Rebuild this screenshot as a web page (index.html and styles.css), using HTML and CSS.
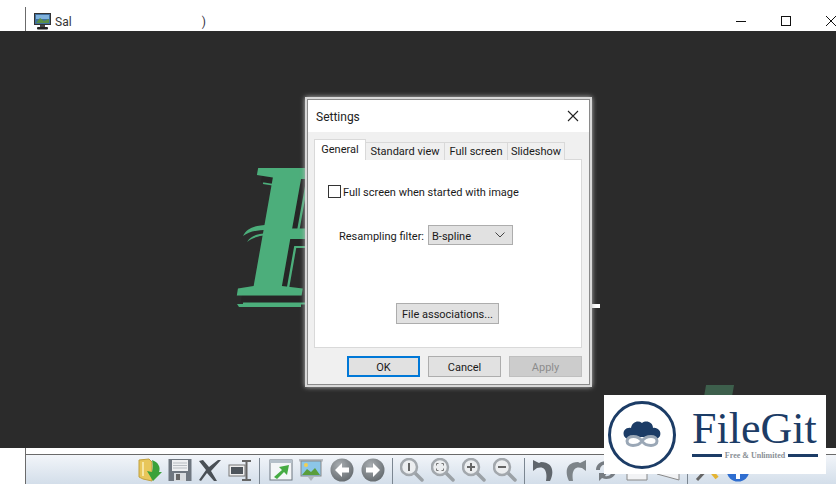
FILE: index.html
```html
<!DOCTYPE html>
<html lang="en">
<head>
    <meta charset="UTF-8">
    <title>Settings</title>
    <link rel="stylesheet" href="styles.css">
</head>
<body>
    <div class="app">
        <div class="titlebar">
            <div class="titlebar-inner">
                <svg class="app-icon" width="17" height="17" viewBox="0 0 17 17">
                    <rect x="0.5" y="0.5" width="16" height="11" fill="#3f6f9f" stroke="#333"/>
                    <rect x="2" y="2" width="13" height="4" fill="#7fb2dd"/>
                    <path d="M2 10 L6 5 L10 8 L15 6 V10 Z" fill="#5b8f45"/>
                    <rect x="6" y="12" width="5" height="2" fill="#444"/>
                    <rect x="3" y="14" width="11" height="2.5" rx="1" fill="#222"/>
                </svg>
                <span class="app-title">Sal</span>
                <span class="app-title-rest">)</span>
                <div class="window-controls">
                    <svg width="10" height="10" viewBox="0 0 10 10"><path d="M0 5.5 H10" stroke="#111"/></svg>
                    <svg width="10" height="10" viewBox="0 0 10 10"><rect x="0.5" y="0.5" width="9" height="9" fill="none" stroke="#111"/></svg>
                    <svg width="10" height="10" viewBox="0 0 10 10"><path d="M0 0 L10 10 M10 0 L0 10" stroke="#111"/></svg>
                </div>
            </div>
        </div>

        <div class="canvas">
            <svg class="flourish" width="32" height="30" viewBox="0 0 32 30">
                <path d="M2 17 C6 9 14 6 28 6 L27 11 C14 11 8 13 2 17 Z" fill="#4cae7b"/>
                <path d="M6 23 C10 17 15 15 27 14 L27 16 C16 17 11 19 6 23 Z" fill="#4cae7b"/>
            </svg>
            <span class="big-letter">F</span>
            <svg class="letter-base" width="64" height="10" viewBox="0 0 64 10">
                <path d="M0 7 H64 V10 H2 Z" fill="#4cae7b"/>
            </svg>
            <span class="peek-white"></span>
            <span class="peek-green"></span>

            <div class="dialog">
                <div class="dialog-title">
                    <span class="text-nudge">Settings</span>
                    <svg width="12" height="12" viewBox="0 0 12 12"><path d="M1 1 L11 11 M11 1 L1 11" stroke="#222" stroke-width="1.1"/></svg>
                </div>
                <div class="dialog-body">
                    <div class="tabs">
                        <div class="tab active">General</div>
                        <div class="tab tab-standard">Standard view</div>
                        <div class="tab tab-full">Full screen</div>
                        <div class="tab tab-slide">Slideshow</div>
                    </div>
                    <div class="panel">
                        <label class="check-row">
                            <span class="checkbox"></span>
                            <span class="text-nudge">Full screen when started with image</span>
                        </label>
                        <div class="filter-row">
                            <span class="filter-label text-nudge">Resampling filter:</span>
                            <div class="select">
                                <span class="text-nudge">B-spline</span>
                                <svg width="10" height="6" viewBox="0 0 10 6"><path d="M0.5 0.5 L5 5 L9.5 0.5" fill="none" stroke="#444"/></svg>
                            </div>
                        </div>
                        <div class="assoc-row">
                            <div class="btn btn-assoc">File associations...</div>
                        </div>
                    </div>
                    <div class="dialog-buttons">
                        <div class="btn btn-main default">OK</div>
                        <div class="btn btn-main">Cancel</div>
                        <div class="btn btn-main disabled">Apply</div>
                    </div>
                </div>
            </div>
        </div>

        <div class="gap-row"><div class="gap-inner"></div></div>

        <div class="toolbar-row">
            <div class="toolbar">
                <!-- open -->
                <svg class="tool tight" viewBox="0 0 24 24">
                    <path d="M1 2 L11 1 L14 4 V23 L5 21 L1 19 Z" fill="#e8c65a" stroke="#c0a040"/>
                    <path d="M5 4 V18" stroke="#f6e6a4" stroke-width="2"/>
                    <path d="M14 2 C20 4 23 9 21 14 L24 14 L15 23 L9 13 L14 14 C15 10 15 6 14 2 Z" fill="#3aa13a"/>
                </svg>
                <!-- save -->
                <svg class="tool tight" viewBox="0 0 24 24">
                    <rect x="0.5" y="1" width="23" height="22" fill="#6f7780"/>
                    <rect x="4" y="2" width="16" height="11" fill="#eef0f2"/>
                    <path d="M5 5 H19 M5 7.5 H19 M5 10 H19" stroke="#b8bdc2"/>
                    <rect x="6" y="15" width="12" height="8" fill="#d8dce0"/>
                    <rect x="8" y="16" width="4" height="6" fill="#666"/>
                </svg>
                <!-- delete -->
                <svg class="tool tight" viewBox="0 0 24 24">
                    <path d="M1 3 L5 2 L11 9 L20 2 L23 2 L13 13 L19 23 L16 23 L9 15 L3 23 L1 22 L8 12 Z" fill="#4a5056"/>
                </svg>
                <!-- rename -->
                <svg class="tool" viewBox="0 0 24 24">
                    <rect x="1" y="7" width="16" height="11" fill="#eee" stroke="#777"/>
                    <rect x="3" y="9" width="12" height="7" fill="#4e555c"/>
                    <path d="M14 3 H23 M18.500 3 V22 M14 22 H23" stroke="#666" stroke-width="2" fill="none"/>
                </svg>
                <span class="sep sep-wide"></span>
                <!-- full screen -->
                <svg class="tool tight" viewBox="0 0 24 24">
                    <rect x="1" y="2" width="22" height="20" fill="#f4f6f8" stroke="#6d7780"/>
                    <rect x="1" y="2" width="22" height="3" fill="#b5c0ca"/>
                    <path d="M5 19 L13 12 L10 9 L20 7 L18 17 L15 14 L8 21 Z" fill="#46ab43"/>
                </svg>
                <!-- slideshow -->
                <svg class="tool" viewBox="0 0 24 24">
                    <rect x="0" y="1" width="24" height="2.500" fill="#b9bec4"/>
                    <rect x="2" y="3" width="20" height="15" fill="#8cc6e8" stroke="#888"/>
                    <path d="M3 17 L8 11 L12 14 L16 10 L21 17 Z" fill="#5a9e3c"/>
                    <circle cx="7" cy="7" r="2" fill="#f2cf52"/>
                    <path d="M9 19 H15 L12 23 Z" fill="#b0b6bc"/>
                </svg>
                <!-- previous -->
                <svg class="tool" viewBox="0 0 24 24">
                    <circle cx="12" cy="12" r="11.500" fill="url(#disc)"/>
                    <path d="M12 5 L5 12 L12 19 V14.500 H19 V9.500 H12 Z" fill="#fff"/>
                </svg>
                <!-- next -->
                <svg class="tool" viewBox="0 0 24 24">
                    <circle cx="12" cy="12" r="11.500" fill="url(#disc)"/>
                    <path d="M12 5 L19 12 L12 19 V14.500 H5 V9.500 H12 Z" fill="#fff"/>
                </svg>
                <span class="sep"></span>
                <!-- zoom 1:1 -->
                <svg class="tool" viewBox="0 0 24 24">
                    <use href="#lens"/>
                    <path d="M9 5 V13" stroke="#666" stroke-width="2"/>
                </svg>
                <!-- zoom fit -->
                <svg class="tool" viewBox="0 0 24 24">
                    <use href="#lens"/>
                    <path d="M5.500 7.500 V5.500 H7.500 M10.500 5.500 H12.500 V7.500 M12.500 10.500 V12.500 H10.500 M7.500 12.500 H5.500 V10.500" stroke="#777" fill="none"/>
                </svg>
                <!-- zoom in -->
                <svg class="tool" viewBox="0 0 24 24">
                    <use href="#lens"/>
                    <path d="M5 9 H13 M9 5 V13" stroke="#666" stroke-width="2"/>
                </svg>
                <!-- zoom out -->
                <svg class="tool" viewBox="0 0 24 24">
                    <use href="#lens"/>
                    <path d="M5 9 H13" stroke="#666" stroke-width="2"/>
                </svg>
                <span class="sep"></span>
                <!-- rotate left -->
                <svg class="tool" viewBox="0 0 24 24">
                    <path d="M1 2 V13 L5 10 C11 8 16 11 14 23 L18 23 C23 13 20 4 9 4 L7 5 Z" fill="#60666c"/>
                </svg>
                <!-- rotate right -->
                <svg class="tool" viewBox="0 0 24 24">
                    <path d="M23 2 V13 L19 10 C13 8 8 11 10 23 L6 23 C1 13 4 4 15 4 L17 5 Z" fill="#7d8489"/>
                </svg>
                <!-- refresh -->
                <svg class="tool" viewBox="0 0 24 24">
                    <path d="M2 12 C2 5 10 1 16 4 L19 1 V10 H11 L13 7 C9 6 6 8 6 12 Z M22 13 C22 19 14 23 8 20 L5 23 V15 H13 L11 18 C15 19 18 16 18 13 Z" fill="#777d83"/>
                </svg>
                <svg class="tool" viewBox="0 0 24 24"><path d="M2 4 H22 V22 H2 Z" fill="#f2f3f5" stroke="#888"/></svg>
                <svg class="tool" viewBox="0 0 24 24"><path d="M1 6 L23 2 V22 L1 16 Z" fill="#f2f3f5" stroke="#888"/></svg>
                <span class="sep"></span>
                <svg class="tool" viewBox="0 0 24 24">
                    <path d="M2 22 L14 9" stroke="#666" stroke-width="3"/>
                    <path d="M8 3 L22 20" stroke="#e4b433" stroke-width="4"/>
                </svg>
                <svg class="tool" viewBox="0 0 24 24">
                    <circle cx="12" cy="12" r="11.500" fill="#2f6ed0"/>
                    <rect x="10" y="9" width="4" height="12" fill="#fff"/>
                    <circle cx="12" cy="5.500" r="2" fill="#fff"/>
                </svg>
            </div>
        </div>

        <div class="watermark">
            <svg class="wm-mark" width="70" height="70" viewBox="0 0 70 70">
                <circle cx="35" cy="35" r="32.500" fill="#fff" stroke="#1c3c66" stroke-width="3"/>
                <path d="M17 36 C15 30 20 27 24 28 C25 22 31 20 35 23 C39 20 46 22 46 28 C50 27 55 31 53 36 C50 41 44 39 42 37 H28 C26 39 20 41 17 36 Z" fill="#1c3c66"/>
                <path d="M35 41 C31 35 21 35 20 41 C20 47 31 47 35 41 C39 35 50 35 50 41 C50 47 39 47 35 41 Z" fill="#fff" stroke="#9aa7b6" stroke-width="3"/>
            </svg>
            <div class="wm-text">
                <div class="wm-name">FileGit</div>
                <div class="wm-sub"><i></i><span>Free &amp; Unlimited</span><i></i></div>
            </div>
        </div>
    </div>

    <svg width="0" height="0" class="defs">
        <defs>
            <radialGradient id="disc" cx="0.4" cy="0.3" r="0.8">
                <stop offset="0" stop-color="#a9aeb2"/>
                <stop offset="1" stop-color="#5f6569"/>
            </radialGradient>
            <g id="lens">
                <path d="M14 14 L22 22" stroke="#9ba1a6" stroke-width="3.500" stroke-linecap="round"/>
                <circle cx="9" cy="9" r="8" fill="#eceef0" stroke="#a3a8ad" stroke-width="2.500"/>
            </g>
        </defs>
    </svg>
</body>
</html>
```

FILE: styles.css
```css
* {
    box-sizing: border-box;
}
html, body {
    margin: 0;
    padding: 0;
    height: 100%;
    overflow: hidden;
    background: #fff;
}
body {
    font-family: Roboto, "Open Sans", sans-serif;
    font-size: 11px;
    color: #1a1a1a;
}
.defs {
    position: absolute;
}
.app {
    position: relative;
    width: 836px;
    height: 484px;
    overflow: hidden;
    display: flex;
    flex-direction: column;
}
.text-nudge {
    padding-top: 2px;
}

/* title bar */
.titlebar {
    height: 31px;
    padding: 7px 0 0 25px;
    background: #fff;
}
.titlebar-inner {
    height: 24px;
    border-left: 1px solid #6b6b6b;
    padding: 6px 0 0 8px;
    display: flex;
    align-items: flex-start;
}
.app-icon {
    flex: none;
}
.app-title {
    margin-left: 4px;
    padding-top: 1px;
    line-height: 17px;
    font-size: 12px;
    width: 159px;
    color: #333;
}
.app-title-rest {
    padding-top: 1px;
    line-height: 17px;
    font-size: 12px;
    color: #334;
}
.window-controls {
    display: flex;
    gap: 35px;
    margin-left: 530px;
    padding-top: 3px;
    flex: none;
}

/* image area */
.canvas {
    position: relative;
    height: 417px;
    background: #2b2b2b;
}
.big-letter {
    position: absolute;
    left: 237px;
    top: 100px;
    font-family: "Liberation Serif", serif;
    font-style: italic;
    font-weight: bold;
    font-size: 196px;
    line-height: 196px;
    color: #4cae7b;
    text-shadow: 4px 7px 0 #262626, 6px 9px 0 #4cae7b;
}
.flourish {
    position: absolute;
    left: 241px;
    top: 188px;
}
.letter-base {
    position: absolute;
    left: 237px;
    top: 266px;
}
.peek-white {
    position: absolute;
    left: 590px;
    top: 273px;
    width: 10px;
    height: 4px;
    background: #fff;
}
.peek-green {
    position: absolute;
    left: 705px;
    top: 354px;
    width: 28px;
    height: 12px;
    background: #3d5f4c;
    transform: skewX(-10deg);
}

/* settings dialog */
.dialog {
    position: absolute;
    left: 307px;
    top: 68px;
    width: 283px;
    height: 286px;
    background: #f0f0f0;
    border: 1px solid #8a8a8a;
    box-shadow: 0 0 0 2px #d8d8d8, 0 0 5px 2px #bbb;
    display: flex;
    flex-direction: column;
}
.dialog-title {
    height: 32px;
    flex: none;
    background: #fff;
    padding: 0 10px 0 8px;
    display: flex;
    align-items: center;
    justify-content: space-between;
    font-size: 12px;
    color: #222;
}
.dialog-body {
    flex: 1;
    padding: 7px 8px 8px 6px;
    display: flex;
    flex-direction: column;
}
.tabs {
    display: flex;
    align-items: flex-end;
    height: 21px;
    flex: none;
    position: relative;
    z-index: 1;
}
.tab {
    height: 18px;
    line-height: 18px;
    text-align: center;
    background: #f0f0f0;
    border: 1px solid #d9d9d9;
    border-left: 0;
    border-bottom: 0;
}
.tab.active {
    width: 52px;
    height: 21px;
    line-height: 19px;
    background: #fff;
    border-left: 1px solid #d9d9d9;
}
.tab-standard {
    width: 79px;
}
.tab-full {
    width: 63px;
}
.tab-slide {
    width: 57px;
}
.panel {
    width: 268px;
    height: 189px;
    margin-top: -1px;
    background: #fff;
    border: 1px solid #d9d9d9;
    padding: 24px 0 0 13px;
}
.check-row {
    display: flex;
    align-items: center;
    gap: 2px;
    height: 14px;
}
.checkbox {
    width: 13px;
    height: 13px;
    flex: none;
    background: #fff;
    border: 1px solid #333;
}
.filter-row {
    display: flex;
    align-items: center;
    margin-top: 27px;
    padding-left: 11px;
    height: 20px;
}
.filter-label {
    width: 89px;
    flex: none;
}
.select {
    width: 85px;
    height: 20px;
    background: #e1e1e1;
    border: 1px solid #adadad;
    padding: 0 7px 0 3px;
    display: flex;
    align-items: center;
    justify-content: space-between;
}
.assoc-row {
    margin-top: 58px;
    padding-left: 68px;
}
.btn {
    display: flex;
    align-items: center;
    justify-content: center;
    height: 21px;
    padding-top: 1px;
    background: #e1e1e1;
    border: 1px solid #adadad;
}
.btn-assoc {
    width: 103px;
}
.dialog-buttons {
    display: flex;
    justify-content: flex-end;
    gap: 8px;
    margin-top: 8px;
    width: 268px;
}
.btn-main {
    width: 73px;
}
.btn-main.default {
    border: 2px solid #0078d7;
}
.btn-main.disabled {
    background: #ccc;
    border-color: #bfbfbf;
    color: #8c8c8c;
}

/* toolbar */
.gap-row {
    height: 6px;
    padding-left: 25px;
}
.gap-inner {
    height: 6px;
    border-left: 1px solid #6b6b6b;
}
.toolbar-row {
    height: 30px;
    padding-left: 25px;
}
.toolbar {
    height: 30px;
    border-left: 1px solid #6b6b6b;
    border-top: 1px solid #6a6a6a;
    background: linear-gradient(#f2f5f9, #d3deea);
    padding: 3px 0 0 112px;
    display: flex;
    align-items: flex-start;
    gap: 7px;
}
.tool {
    width: 24px;
    height: 24px;
    flex: none;
    filter: blur(0.4px);
}
.tool.tight {
    margin-right: -1px;
}
.sep {
    width: 1px;
    height: 26px;
    flex: none;
    background: #7b8691;
}
.sep-wide {
    margin-right: 2px;
}

/* watermark */
.watermark {
    position: absolute;
    left: 604px;
    top: 395px;
    width: 222px;
    height: 79px;
    background: #fff;
    display: flex;
    align-items: center;
    padding-left: 3px;
}
.wm-mark {
    flex: none;
}
.wm-text {
    margin-left: 15px;
    width: 126px;
    padding-bottom: 3px;
}
.wm-name {
    font-family: "Liberation Serif", serif;
    font-size: 44px;
    line-height: 44px;
    color: #1c3c66;
    white-space: nowrap;
}
.wm-sub {
    display: flex;
    align-items: center;
    gap: 3px;
    font-family: "Liberation Serif", serif;
    font-size: 8px;
    font-weight: bold;
    color: #8a8f96;
    white-space: nowrap;
}
.wm-sub i {
    flex: 1;
    height: 3px;
    background: #1c3c66;
}
```
